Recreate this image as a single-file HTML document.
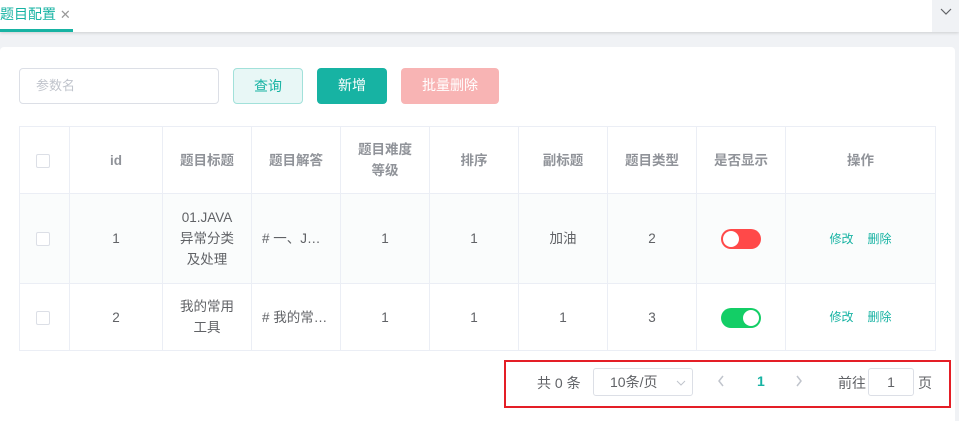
<!DOCTYPE html>
<html><head><meta charset="utf-8"><style>
*{box-sizing:border-box;margin:0;padding:0}
body{width:959px;height:421px;overflow:hidden;background:#f0f2f5;font-family:"Liberation Sans","Noto Sans CJK SC",sans-serif;font-size:14px;color:#606266;position:relative}
.abs{position:absolute}
.tabs{left:0;top:0;width:959px;height:32px;background:#fff;box-shadow:0 1px 3px rgba(0,0,0,.15)}
.tab{left:0;top:4px;font-size:14px;color:#17b3a3}
.tabline{left:0;top:29px;width:73px;height:3px;background:#17b3a3}
.dd{left:932px;top:0;width:27px;height:32px;background:#f0f2f5}
.card{left:0;top:47px;width:955px;height:374px;background:#fff;border-radius:4px 4px 0 0}
.inp{left:19px;top:68px;width:200px;height:36px;border:1px solid #dcdfe6;border-radius:4px;color:#c0c4cc;padding-left:16px;line-height:34px;font-size:13px}
.btn{top:68px;height:36px;border-radius:4px;text-align:center;line-height:34px;font-size:14px}
table{position:absolute;left:19px;top:126px;border-collapse:collapse;width:917px}
td{border:1px solid #ebeef5;text-align:center;color:#606266;font-size:13.5px;line-height:21px}
thead td{font-weight:bold;color:#909399;height:67px}
.cb{display:inline-block;width:14px;height:14px;border:1px solid #dcdfe6;border-radius:2px;background:#fff;vertical-align:middle;margin-left:-4px}
.sw{display:inline-block;width:40px;height:20px;border-radius:10px;position:relative;vertical-align:middle}
.sw i{position:absolute;top:2px;width:16px;height:16px;border-radius:50%;background:#fff}
.lk{color:#17b3a3;font-size:12px;margin:0 7px}
.pg{left:504px;top:360px;width:447px;height:48px;border:2px solid #e41e26}
</style></head><body>
<div class="abs tabs"></div>
<div class="abs tab">题目配置 <span style="color:#999;font-size:13px">✕</span></div>
<div class="abs tabline"></div>
<div class="abs dd"><svg width="27" height="32"><path d="M9 9l5 5 5-5" fill="none" stroke="#606266" stroke-width="1.2"/></svg></div>
<div class="abs card"></div>
<div class="abs inp">参数名</div>
<div class="abs btn" style="left:233px;width:70px;background:#e8f7f6;border:1px solid #a2e1da;color:#17b3a3">查询</div>
<div class="abs btn" style="left:317px;width:70px;background:#17b3a3;color:#fff">新增</div>
<div class="abs btn" style="left:401px;width:98px;background:#f8b4b4;color:#fff">批量删除</div>
<table>
<thead><tr>
<td style="width:50px"><span class="cb"></span></td><td style="width:93px">id</td><td style="width:89px">题目标题</td><td style="width:89px">题目解答</td><td style="width:89px">题目难度<br>等级</td><td style="width:89px">排序</td><td style="width:89px">副标题</td><td style="width:89px">题目类型</td><td style="width:89px">是否显示</td><td>操作</td>
</tr></thead>
<tbody>
<tr style="height:90px;background:#fafcfc"><td><span class="cb"></span></td><td>1</td><td>01.JAVA<br>异常分类<br>及处理</td><td style="text-align:left;padding-left:10px">#&nbsp;一、J…</td><td>1</td><td>1</td><td>加油</td><td>2</td><td><span class="sw" style="background:#ff4949"><i style="left:2px"></i></span></td><td><span class="lk">修改</span><span class="lk">删除</span></td></tr>
<tr style="height:67px"><td><span class="cb"></span></td><td>2</td><td>我的常用<br>工具</td><td style="text-align:left;padding-left:10px">#&nbsp;我的常…</td><td>1</td><td>1</td><td>1</td><td>3</td><td><span class="sw" style="background:#13ce66"><i style="left:22px"></i></span></td><td><span class="lk">修改</span><span class="lk">删除</span></td></tr>
</tbody></table>
<div class="abs pg"></div>
<div class="abs" style="left:537px;top:373px">共 0 条</div>
<div class="abs" style="left:593px;top:368px;width:100px;height:28px;border:1px solid #dcdfe6;border-radius:3px;padding-left:16px;line-height:26px">10条/页<svg class="abs" style="left:82px;top:10px" width="10" height="8"><path d="M1 2l4 4 4-4" fill="none" stroke="#c0c4cc"/></svg></div>
<svg class="abs" style="left:717px;top:375px" width="8" height="12"><path d="M6 1L2 6l4 5" fill="none" stroke="#c0c4cc" stroke-width="1.5"/></svg>
<div class="abs" style="left:757px;top:373px;color:#17b3a3;font-weight:bold">1</div>
<svg class="abs" style="left:795px;top:375px" width="8" height="12"><path d="M2 1l4 5-4 5" fill="none" stroke="#c0c4cc" stroke-width="1.5"/></svg>
<div class="abs" style="left:838px;top:373px">前往</div>
<div class="abs" style="left:868px;top:368px;width:46px;height:28px;border:1px solid #dcdfe6;border-radius:3px;text-align:center;line-height:26px">1</div>
<div class="abs" style="left:918px;top:373px">页</div>
</body></html>
